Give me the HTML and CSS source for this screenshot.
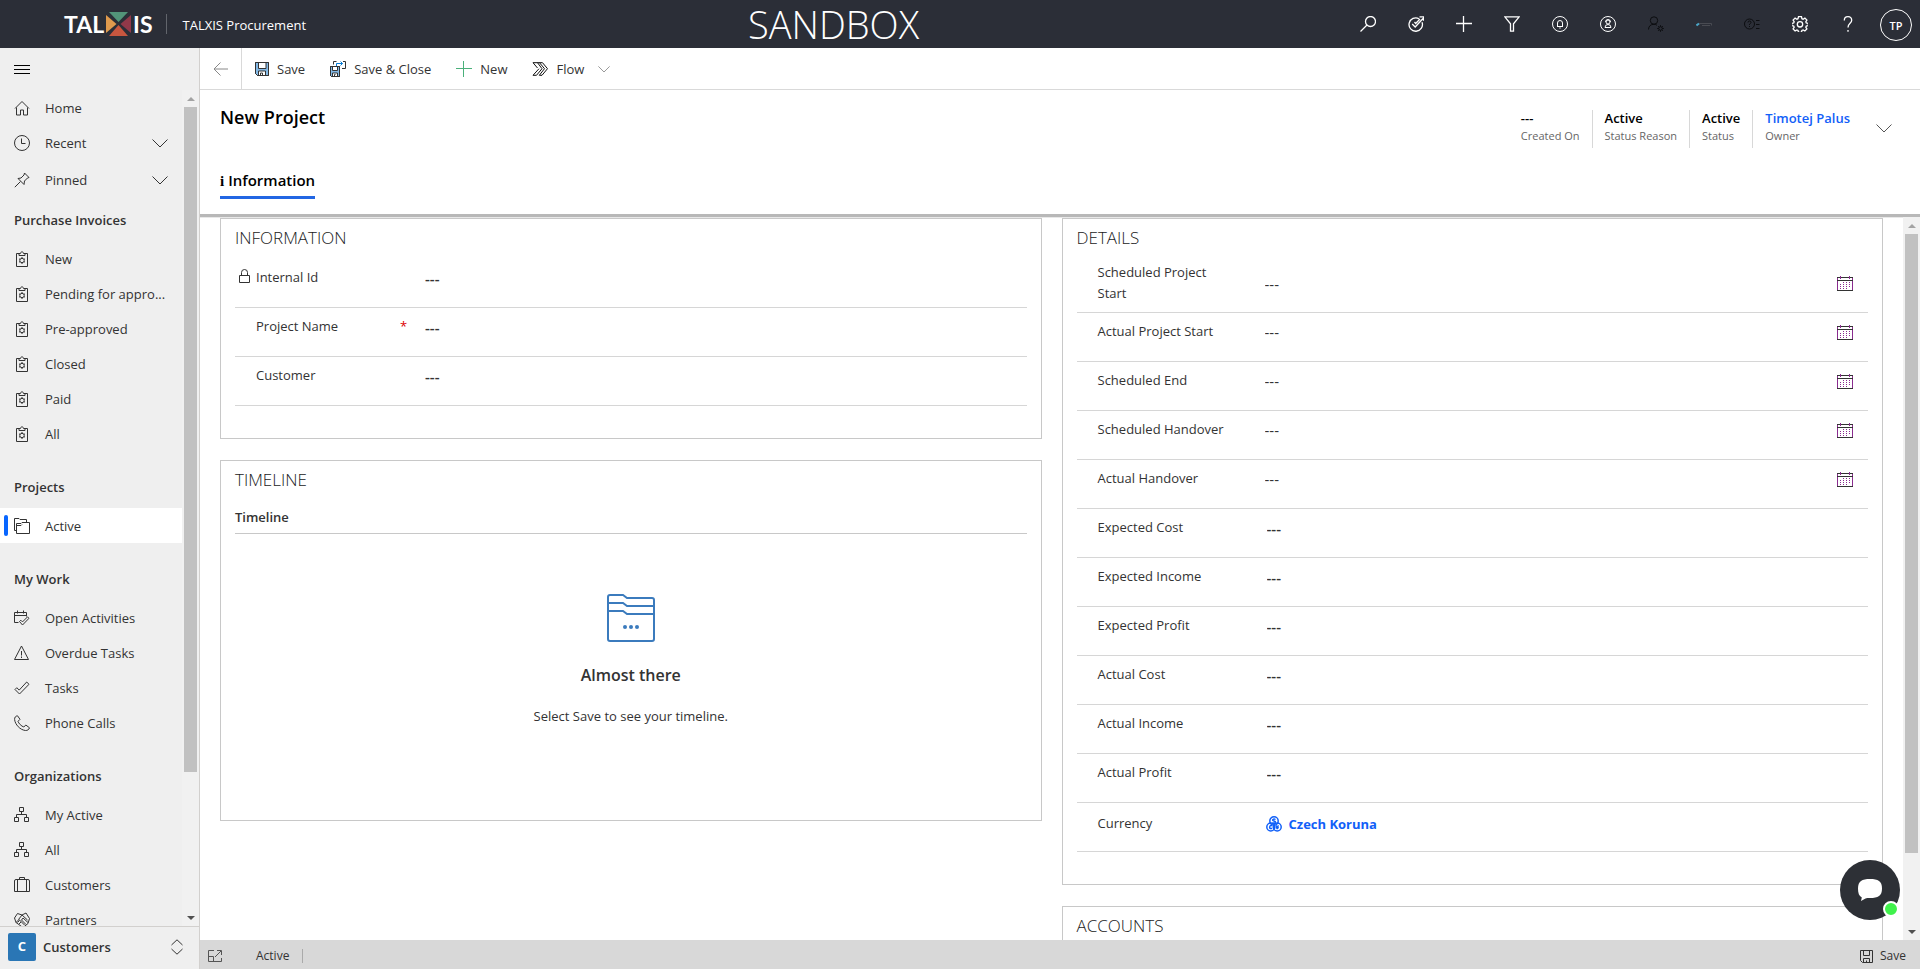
FILE: index.html
```html
<!DOCTYPE html>
<html lang="en">
<head>
<meta charset="utf-8">
<title>New Project - TALXIS Procurement</title>
<link rel="stylesheet" href="styles.css">
</head>
<body>
<svg class="sprite" aria-hidden="true">
  <symbol id="home" viewBox="0 0 16 16"><path d="M1 8.5 8 1.5l7 7M2.5 7.5v7.5h4v-5h3v5h4V7.5"/></symbol>
  <symbol id="clock" viewBox="0 0 16 16"><circle cx="8" cy="8" r="7.5"/><path d="M7.5 3.5v5h4"/></symbol>
  <symbol id="pin" viewBox="0 0 16 16"><path d="M10.5 1 15 5.500l-1.500.500-3 3-.500 3.500L4 6.500 7 6l3-3zM6.500 9.500.800 15.200"/></symbol>
  <symbol id="down" viewBox="0 0 16 16"><path d="M.5 4.500 8 12l7.500-7.500"/></symbol>
  <symbol id="clip" viewBox="0 0 16 16"><path d="M5 2.500H2.500v13h11v-13H11M5 4.500v-2h1.500C6.500.300 9.500.300 9.500 2.500H11v2z"/><circle cx="8" cy="9.500" r="2.200"/><path d="M8 6v1.200M8 11.800V13M5 7.800l1 .600M10 10.600l1 .600M5 11.200l1-.600M10 8.400l1-.600"/></symbol>
  <symbol id="folders" viewBox="0 0 16 16"><path d="M2.500 12.500h-2V.500H5l1 1h6.500v3M2.500 15.500v-10H7l1-1h7.500v11zM2.500 7.500H7l1-1"/></symbol>
  <symbol id="activity" viewBox="0 0 16 16"><path d="M4.500 12.500h-4v-10h12v4M.500 5.500h12M3.500.500v3M9.500.500v3M5.500 11.500l1.300-1.300 1.700 1.700 5-5 1.500 1.400-6.500 6.700z"/></symbol>
  <symbol id="warn" viewBox="0 0 16 16"><path d="M7.500 1 14.500 14.500H.500zM7.500 6v4.500M7.500 11.500v1.500"/></symbol>
  <symbol id="check" viewBox="0 0 16 16"><path d="m1 9.500 1.800-1.800 2.400 2.400L12.700 2 15 4.300 5.500 14z"/></symbol>
  <symbol id="phone" viewBox="0 0 16 16"><path d="M3.500.800C1.500 1 .500 2.500.600 4.500c.500 5 5.500 10.500 10.900 11 2 .100 3.500-1 4-2.700L11.800 10l-2 2C7.500 11.300 4.500 8.300 4 6.300l2-2z"/></symbol>
  <symbol id="org" viewBox="0 0 16 16"><path d="M5.500.500h4v4h-4zM.500 10.500h4v4h-4zM10.500 10.500h4v4h-4zM7.500 4.500v3M2.500 10.500v-3h10v3"/></symbol>
  <symbol id="bag" viewBox="0 0 16 16"><path d="M2 2.500h12q1.500 0 1.500 1.500v10.500H.500V4Q.500 2.500 2 2.500zM5.500 2.500v-2h5v2M3.500 2.500v12M12.500 2.500v12"/></symbol>
  <symbol id="hands" viewBox="0 0 16 16"><path d="M3.500 1.500 8 3l4-2 3.500 5.500-1.500 5-5 4L2 10.500.500 6zM4.500 7.500 8 3l5.500 5M2 10.500l3-3 5.500 5.500M5 12l2-2M3.500 10.500l2-2M12 12.500 7.500 8l1.500-2 5 4.500"/></symbol>
  <symbol id="updown" viewBox="0 0 16 16"><path d="M2.500 6 8 .8 13.500 6M2.500 10 8 15.200 13.500 10"/></symbol>
  <symbol id="floppy" viewBox="0 0 14 14"><path fill="#83b9e6" d="M.500.500h13v13h-11l-2-2z"/><path fill="#fff" d="M3.500.500h7.500v6H3.500zM3.500 13.500V9h7v4.500z"/><path d="M.500.500h13v13h-11l-2-2zM5.500 13.500V11h2v2.500"/></symbol>
  <symbol id="saveclose" viewBox="0 0 16 16"><path fill="#83b9e6" d="M.500 5.500h9v10h-8l-1-1z"/><path fill="#fff" d="M2.500 5.500h5v4h-5zM2.500 15.500V12h5v3.500z"/><path d="M.500 5.500h9v10h-8l-1-1zM4.500 15.500v-2h1M3.500 3.500v-3h3M13 .500h2.500v7H12"/><path stroke="#0078d4" d="M6.500 5V2.500h6M10.500.500l2 2-2 2"/></symbol>
  <symbol id="plus" viewBox="0 0 16 16"><path d="M7.500 0v16M0 7.500h16"/></symbol>
  <symbol id="flow" viewBox="0 0 16 14"><path d="M1 .700h9.500l5 6-5.500 6.600H7.300l5.200-6.600L7.500.700M1 .700 5.500 6M5.500 .700l4.500 6-5.500 6.600H1l6-6.600"/></symbol>
  <symbol id="back" viewBox="0 0 16 16"><path d="M15 8H1.500M7.500 1.500 1 8l6.500 6.500"/></symbol>
  <symbol id="search" viewBox="0 0 16 16"><circle cx="10.500" cy="5.500" r="5"/><path d="M7 9 .5 15.500"/></symbol>
  <symbol id="target" viewBox="0 0 16 16"><path d="M14 6.200A6.700 6.700 0 1 1 11 2.700M4.200 8l3 3L15 2.500M11.500.800h4v4M6.500 6l1.200 1.500L12 3"/></symbol>
  <symbol id="funnel" viewBox="0 0 16 16"><path d="M.8.800h14.400l-5.700 7v7.400h-3V7.800z"/></symbol>
  <symbol id="bell" viewBox="0 0 16 16"><circle cx="8" cy="8" r="7.500"/><path d="M5.500 10.500V7a2.500 2.500 0 0 1 5 0v3.500zM5 10.500h6M7.300 12h1.400"/></symbol>
  <symbol id="agent" viewBox="0 0 16 16"><circle cx="8" cy="8" r="7.500"/><circle cx="8" cy="6" r="2"/><path d="M5 11.500q0-3 3-3t3 3zM5.500 6a2.500 2.500 0 0 1 5 0"/></symbol>
  <symbol id="usergear" viewBox="0 0 16 16"><circle cx="6" cy="4.500" r="3.700"/><path d="M.500 13.500Q.800 8.300 6 8.300q2 0 3 1"/><circle cx="12.500" cy="12.500" r="1.800"/><path d="M12.500 9.200v1.500M12.500 14.300v1.500M9.200 12.500h1.500M14.300 12.500h1.500M10.200 10.200l1 1M13.800 13.800l1 1M10.200 14.800l1-1M13.800 11.200l1-1"/></symbol>
  <symbol id="helplist" viewBox="0 0 16 16"><circle cx="5.500" cy="8" r="5"/><path d="M4 6.500q0-1.500 1.500-1.500T7 6.500Q7 7.200 5.500 8.200v.8M5.500 10v1M12 4.500h3.500M12 8.500h3.500M12 12.500h3.500"/></symbol>
  <symbol id="gear" viewBox="0 0 16 16"><path d="M6.500.700h3l.400 2 1.200.500 1.800-1.100 2 2-1.100 1.800.500 1.100 2 .500v2l-2 .500-.500 1.200 1.100 1.800-2 2-1.800-1.100-1.200.500-.400 2h-3l-.500-2-1.100-.500-1.800 1.100-2-2 1.100-1.800-.500-1.200-2-.500v-2l2-.500.500-1.100-1.100-1.800 2-2 1.800 1.100L6 2.700z"/><circle cx="8" cy="8.300" r="2.700"/></symbol>
  <symbol id="question" viewBox="0 0 16 16"><path d="M4.300 4.500Q4.300.700 8 .700t3.700 3.600C11.700 7.300 8 7.500 8 11.500M8 14v1.800"/></symbol>
  <symbol id="lock" viewBox="0 0 12 14"><path d="M.500 6.500h10v7H.500zM2.500 6.500V3.500a3 3 0 0 1 6 0v3"/></symbol>
  <symbol id="cal" viewBox="0 0 16 15"><path stroke="#8a2c8f" d="M.500 1v13M15.500 1v13"/><path d="M0 1.500h16M0 4.500h16M0 14.500h16"/><path stroke="#8a2c8f" d="M3.500 0v3M12.500 0v3"/><path stroke="#8a2c8f" stroke-dasharray="1 2" d="M6 6.500h8M3 8.500h11M3 10.500h11M3 12.500h9"/></symbol>
  <symbol id="popout" viewBox="0 0 14 12"><path d="M6 .500H.500v11h13V8M.500 6.500h5v5M7 7l6-6M9 .500h4.500V5"/></symbol>
  <symbol id="coins" viewBox="0 0 16 16"><circle cx="8" cy="5" r="4.200"/><circle cx="4.800" cy="11" r="4"/><circle cx="11.200" cy="11" r="4"/><path d="M9.500 3.500q-1.500-1-2.500 0t1 1.500 1 1.700-2.500 0M6 9.800q-2-.800-2.300 1.200T6 12.200M9.800 9.500l1.400 1.500 1.400-1.500M11.200 11v2.200M9.800 11.800h3"/></symbol>
</svg>

<header class="topbar">
  <a class="logo" href="#" aria-label="TALXIS"><span>TAL</span>
    <svg class="logo-x" viewBox="0 0 25 24"><path fill="#529479" d="M3 0h19l-9.500 10z"/><path fill="#df9a4d" d="M0 3l10.500 9L0 21z"/><path fill="#913849" d="M25 3l-10.500 9L25 21z"/><path fill="#c7563f" d="M3 24h19l-9.500-11z"/></svg>
    <span>IS</span></a>
  <span class="app-name">TALXIS Procurement</span>
  <div class="env">SANDBOX</div>
  <div class="tools">
    <button aria-label="Search"><svg class="i"><use href="#search"/></svg></button>
    <button aria-label="Tasks"><svg class="i"><use href="#target"/></svg></button>
    <button aria-label="Create"><svg class="i"><use href="#plus"/></svg></button>
    <button aria-label="Filter"><svg class="i"><use href="#funnel"/></svg></button>
    <button class="thin" aria-label="Notifications"><svg class="i"><use href="#bell"/></svg></button>
    <button class="thin" aria-label="Account"><svg class="i"><use href="#agent"/></svg></button>
    <button class="dim" aria-label="User settings"><svg class="i"><use href="#usergear"/></svg></button>
    <button class="dim" aria-label="Banner"><svg class="i" viewBox="0 0 16 16"><path stroke="#494b52" d="M3 7.500h12.500v2M6 9.500h8"/><path stroke="#4ba6c8" stroke-width="2" d="M.5 9.500 3 7.500"/></svg></button>
    <button class="dim" aria-label="Guides"><svg class="i"><use href="#helplist"/></svg></button>
    <button aria-label="Settings"><svg class="i"><use href="#gear"/></svg></button>
    <button aria-label="Help"><svg class="i"><use href="#question"/></svg></button>
    <button aria-label="Profile"><span class="avatar">TP</span></button>
  </div>
</header>

<div class="shell">
  <aside class="sidebar">
    <button class="burger" aria-label="Toggle navigation"><span></span><span></span><span></span></button>
    <div class="nav-wrap">
      <nav class="nav">
        <a href="#"><svg class="i"><use href="#home"/></svg>Home</a>
        <a href="#"><svg class="i"><use href="#clock"/></svg>Recent<svg class="i end"><use href="#down"/></svg></a>
        <a href="#" class="pinned"><svg class="i"><use href="#pin"/></svg>Pinned<svg class="i end"><use href="#down"/></svg></a>
        <h2 class="first">Purchase Invoices</h2>
        <a href="#"><svg class="i"><use href="#clip"/></svg>New</a>
        <a href="#"><svg class="i"><use href="#clip"/></svg>Pending for appro...</a>
        <a href="#"><svg class="i"><use href="#clip"/></svg>Pre-approved</a>
        <a href="#"><svg class="i"><use href="#clip"/></svg>Closed</a>
        <a href="#"><svg class="i"><use href="#clip"/></svg>Paid</a>
        <a href="#"><svg class="i"><use href="#clip"/></svg>All</a>
        <h2>Projects</h2>
        <a href="#" class="current" aria-current="page"><svg class="i"><use href="#folders"/></svg>Active</a>
        <h2>My Work</h2>
        <a href="#"><svg class="i"><use href="#activity"/></svg>Open Activities</a>
        <a href="#"><svg class="i"><use href="#warn"/></svg>Overdue Tasks</a>
        <a href="#"><svg class="i"><use href="#check"/></svg>Tasks</a>
        <a href="#"><svg class="i"><use href="#phone"/></svg>Phone Calls</a>
        <h2>Organizations</h2>
        <a href="#"><svg class="i"><use href="#org"/></svg>My Active</a>
        <a href="#"><svg class="i"><use href="#org"/></svg>All</a>
        <a href="#"><svg class="i"><use href="#bag"/></svg>Customers</a>
        <a href="#"><svg class="i"><use href="#hands"/></svg>Partners</a>
      </nav>
      <div class="scroll nav-scroll" aria-hidden="true"><i class="up"></i><b></b><s></s><i class="dn"></i></div>
    </div>
    <button class="area"><span class="badge">C</span>Customers<svg class="i end"><use href="#updown"/></svg></button>
  </aside>

  <main class="main">
    <div class="commands">
      <button class="back" aria-label="Back"><svg class="i"><use href="#back"/></svg></button>
      <button><svg class="i floppy"><use href="#floppy"/></svg>Save</button>
      <button><svg class="i"><use href="#saveclose"/></svg>Save &amp; Close</button>
      <button><svg class="i green"><use href="#plus"/></svg>New</button>
      <button><svg class="i flow"><use href="#flow"/></svg>Flow<svg class="i small"><use href="#down"/></svg></button>
    </div>

    <div class="record">
      <div class="record-top">
        <h1>New Project</h1>
        <dl class="facts">
          <div><dd>---</dd><dt>Created On</dt></div>
          <div><dd>Active</dd><dt>Status Reason</dt></div>
          <div><dd>Active</dd><dt>Status</dt></div>
          <div><dd><a href="#">Timotej Palus</a></dd><dt>Owner</dt></div>
        </dl>
        <button class="expand" aria-label="More header fields"><svg class="i"><use href="#down"/></svg></button>
      </div>
      <div class="tabs" role="tablist"><button role="tab" aria-selected="true"><span class="info">i</span>Information</button></div>
    </div>

    <div class="body">
      <div class="columns">
        <div class="column">
          <section class="card">
            <h3>INFORMATION</h3>
            <div class="row"><label for="f1"><svg class="lock"><use href="#lock"/></svg>Internal Id</label><input id="f1" value="---" readonly></div>
            <div class="row"><label for="f2">Project Name<em>*</em></label><input id="f2" value="---"></div>
            <div class="row"><label for="f3">Customer</label><input id="f3" value="---"></div>
          </section>
          <section class="card timeline">
            <h3>TIMELINE</h3>
            <h4>Timeline</h4>
            <div class="empty">
              <svg class="folder" viewBox="0 0 48 48"><path d="M1 45V3q0-2 2-2h13l4 3h25q2 0 2 2v39q0 2-2 2H3q-2 0-2-2zM1 9h15l4 3h27M1 17h15l4 3h27"/><circle cx="18" cy="33" r="2"/><circle cx="24" cy="33" r="2"/><circle cx="30" cy="33" r="2"/></svg>
              <strong>Almost there</strong>
              <p>Select Save to see your timeline.</p>
            </div>
          </section>
        </div>
        <div class="column">
          <section class="card details">
            <h3>DETAILS</h3>
            <div class="row date"><label for="d1">Scheduled Project Start</label><input id="d1" value="---"><button aria-label="Pick date"><svg class="cal"><use href="#cal"/></svg></button></div>
            <div class="row date"><label for="d2">Actual Project Start</label><input id="d2" value="---"><button aria-label="Pick date"><svg class="cal"><use href="#cal"/></svg></button></div>
            <div class="row date"><label for="d3">Scheduled End</label><input id="d3" value="---"><button aria-label="Pick date"><svg class="cal"><use href="#cal"/></svg></button></div>
            <div class="row date"><label for="d4">Scheduled Handover</label><input id="d4" value="---"><button aria-label="Pick date"><svg class="cal"><use href="#cal"/></svg></button></div>
            <div class="row date"><label for="d5">Actual Handover</label><input id="d5" value="---"><button aria-label="Pick date"><svg class="cal"><use href="#cal"/></svg></button></div>
            <div class="row"><label for="d6">Expected Cost</label><input id="d6" value="---"></div>
            <div class="row"><label for="d7">Expected Income</label><input id="d7" value="---"></div>
            <div class="row"><label for="d8">Expected Profit</label><input id="d8" value="---"></div>
            <div class="row"><label for="d9">Actual Cost</label><input id="d9" value="---"></div>
            <div class="row"><label for="d10">Actual Income</label><input id="d10" value="---"></div>
            <div class="row"><label for="d11">Actual Profit</label><input id="d11" value="---"></div>
            <div class="row currency"><span class="label">Currency</span><a href="#"><svg class="i"><use href="#coins"/></svg>Czech Koruna</a></div>
          </section>
          <section class="card"><h3>ACCOUNTS</h3></section>
        </div>
      </div>
      <div class="scroll body-scroll" aria-hidden="true"><i class="up"></i><b></b><s></s><i class="dn"></i></div>
    </div>

    <footer class="status">
      <button aria-label="Pop out"><svg class="popout"><use href="#popout"/></svg></button>
      <span class="state">Active</span>
      <button class="save"><svg class="disk" viewBox="0 0 13 13"><path d="M.500.500h12v12h-10l-2-2zM3.500.500v5h6v-5M3.500 12.500v-4h6v4M6.500 12.500v-2"/></svg>Save</button>
    </footer>
  </main>
</div>

<button class="chat" aria-label="Open chat"><svg viewBox="0 0 24 22"><path fill="#fff" d="M12 0C20 0 24 2 24 9.500S20 19 12 19c-2 0-3.500 0-4.500.500L3 22l.800-3.500C1 17 0 14 0 9.500 0 2 4 0 12 0z"/></svg><span></span></button>
</body>
</html>
```
FILE: styles.css
```css
* { box-sizing: border-box; }
body {
  margin: 0;
  height: 100vh;
  display: flex;
  flex-direction: column;
  overflow: hidden;
  font: 13px/20px "Open Sans", "Noto Sans", sans-serif;
  color: #333;
  background: #fff;
}
button, input { font: inherit; color: inherit; background: none; border: 0; padding: 0; margin: 0; }
a { color: inherit; text-decoration: none; }
h1, h2, h3, h4, p, dl, dd { margin: 0; }
.sprite { position: absolute; width: 0; height: 0; }
svg { fill: none; stroke: currentColor; flex: none; }
.i { width: 16px; height: 16px; }

/* Top bar */
.topbar { display: flex; align-items: center; flex: none; height: 48px; background: #2b2e37; color: #fff; }
.topbar > * { flex: none; }
.logo { display: flex; align-items: center; gap: 2px; margin-left: 64px; padding-right: 13px; height: 20px; border-right: 1px solid #62656c; font: bold 23px/24px Lato, sans-serif; }
.logo-x { width: 25px; height: 24px; stroke: none; }
.app-name { margin: 2px 0 0 16px; }
.env { position: absolute; left: 748px; font-size: 38px; line-height: 40px; font-weight: 300; }
.tools { display: flex; margin-left: auto; }
.tools button { display: flex; align-items: center; justify-content: center; width: 48px; height: 46px; }
.tools .i { stroke-width: 1.3; }
.tools .thin .i, .tools .dim .i { stroke-width: 1; }
.tools .dim { color: #0c0d10; }
.avatar { width: 32px; height: 32px; margin-top: 2px; border: 1px solid #fff; border-radius: 50%; font-size: 11px; font-weight: 600; line-height: 31px; }

.shell { display: flex; flex: 1; min-height: 0; }

/* Site map */
.sidebar { display: flex; flex-direction: column; flex: none; width: 200px; background: #efefef; border-right: 1px solid #d2d0ce; }
.burger { display: flex; flex-direction: column; justify-content: center; gap: 3px; height: 42px; padding-left: 14px; }
.burger span { width: 16px; height: 1px; background: #000; }
.nav-wrap { display: flex; flex: 1; min-height: 0; }
.nav { flex: 1; overflow: hidden; }
.nav a { display: flex; align-items: center; gap: 15px; height: 35px; padding: 0 14px; white-space: nowrap; }
.nav .pinned { margin-top: 2px; }
.nav h2 { margin-top: 15px; padding-left: 14px; font-size: 13px; line-height: 42px; font-weight: 600; }
.nav .first { margin-top: 2px; }
.end { margin-left: auto; }
.nav .current { position: relative; background: #fff; }
.current::before { content: ""; position: absolute; left: 4px; top: 7px; width: 4px; height: 21px; border-radius: 2px; background: #0866ff; }
.area { display: flex; align-items: center; gap: 7px; height: 43px; padding: 0 14px 2px 8px; border-top: 1px solid #d2d0ce; font-weight: 600; }
.badge { width: 28px; height: 28px; border-radius: 2px; background: #2a76b5; color: #fff; line-height: 26px; font-weight: 700; }

/* Scroll tracks */
.scroll { display: flex; flex-direction: column; flex: none; width: 17px; align-items: center; background: #f1f1f1; }
.scroll i { display: flex; align-items: center; justify-content: center; height: 17px; }
.scroll i::before { content: ""; border: 4px solid transparent; }
.scroll .up::before { border-top: 0; border-bottom-color: #a3a3a3; }
.scroll .dn::before { border-bottom: 0; border-top-color: #505050; }
.scroll b { width: 13px; background: #c1c1c1; }
.nav-scroll b { flex: 664; }
.nav-scroll s { flex: 137; }
.body-scroll b { flex: 618; }
.body-scroll s { flex: 70; }

/* Command bar */
.main { display: flex; flex-direction: column; flex: 1; min-width: 0; }
.commands { display: flex; flex: none; height: 42px; gap: 25px; border-bottom: 1px solid #d9d9d9; }
.commands button { display: flex; align-items: center; gap: 8px; }
.commands .back { width: 42px; justify-content: center; color: #888; border-right: 1px solid #d9d9d9; margin-right: -12px; }
.commands .floppy { width: 14px; height: 14px; }
.commands .green { color: #4ab07a; }
.commands .flow { height: 14px; color: #111; }
.small { width: 12px; height: 12px; margin-left: 6px; color: #777; }

/* Record header */
.record { flex: none; padding: 0 20px; border-bottom: 3px solid #b8b8b8; box-shadow: 0 1px 0 #e8e8e8; height: 127px; }
.record-top { display: flex; align-items: flex-start; height: 74px; }
.record h1 { margin-top: 15px; font-size: 18px; line-height: 24px; font-weight: 600; color: #000; }
.facts { display: flex; margin: 20px 0 0 auto; font-size: 11px; color: #666; }
.facts div { display: flex; flex-direction: column; height: 38px; padding: 0 12px; border-left: 1px solid #d8d8d8; }
.facts div:first-child { border: 0; }
.facts dd { font-size: 13px; line-height: 16px; font-weight: 600; color: #000; }
.facts dd a { color: #1160f8; }
.expand { margin: 30px 8px 0 14px; height: 16px; color: #555; }
.tabs button { height: 35px; border-bottom: 3px solid #2266e3; font-size: 15px; line-height: 32px; font-weight: 600; color: #000; }
.info { margin-right: 4px; font: bold 15px/20px "Liberation Serif", serif; }

/* Form */
.body { display: flex; flex: 1; min-height: 0; }
.columns { display: grid; grid-template-columns: 1fr 1fr; gap: 20px; flex: 1; padding: 1px 20px 0; overflow: hidden; }
.column { display: flex; flex-direction: column; gap: 21px; }
.card { flex: none; border: 1px solid #c8c8c8; padding: 8px 14px 32px; }
.card h3 { margin-bottom: 10px; font-size: 17px; line-height: 22px; font-weight: 300; color: #222; }
.row { display: flex; align-items: flex-start; min-height: 49px; padding: 8px 0; border-bottom: 1px solid #d6d6d6; }
.row label, .label { position: relative; width: 148px; padding-left: 21px; line-height: 21px; flex: none; }
.row em { position: absolute; left: 165px; color: #d00; font-style: normal; line-height: 20px; }
.row input { flex: 1; min-width: 0; height: 20px; margin: 1px 0 0 42px; font-size: 15px; font-weight: 600; }
.lock { position: absolute; left: 4px; top: 2px; width: 12px; height: 14px; }
.details .date input { font-weight: 400; margin-left: 40px; }
.row button { margin: 4px 15px 0 0; height: 15px; }
.cal { display: block; width: 16px; height: 15px; }
.date:nth-child(2) { padding: 3px 0 8px; }
.details .date:nth-child(2) input { margin-top: 12px; }
.date:nth-child(2) button { margin-top: 14px; }
.currency a { display: flex; gap: 7px; margin: 3px 0 0 41px; color: #1160f8; font-weight: 700; }
.currency a svg { margin-top: 2px; stroke-width: 1.5; }
.currency .label { margin-top: 2px; }

.timeline { min-height: 361px; }
.timeline h4 { padding: 6px 0; border-bottom: 1px solid #c8c8c8; font-size: 13px; line-height: 20px; font-weight: 600; }
.empty { display: flex; flex-direction: column; align-items: center; padding-top: 60px; }
.folder { width: 48px; height: 48px; stroke: #3b7bbd; stroke-width: 2; }
.folder circle { fill: #3b7bbd; stroke: none; }
.empty strong { margin-top: 20px; font-size: 16px; line-height: 26px; font-weight: 600; }
.empty p { margin-top: 18px; }

/* Status bar */
.status { display: flex; align-items: center; flex: none; height: 29px; padding: 3px 14px 0 8px; background: #d8d8d8; font-size: 12px; line-height: 18px; }
.popout { display: block; width: 14px; height: 12px; color: #555; }
.state { margin-left: 34px; padding-right: 13px; line-height: 14px; border-right: 1px solid #aaa; }
.save { display: flex; align-items: center; gap: 7px; margin-left: auto; }
.disk { width: 13px; height: 13px; }

/* Chat launcher */
.chat { position: fixed; right: 20px; bottom: 49px; width: 60px; height: 60px; border-radius: 50%; background: #2d3036; }
.chat svg { display: block; width: 24px; height: 22px; margin: 0 auto; stroke: none; }
.chat span { position: absolute; right: 1px; bottom: 3px; width: 16px; height: 16px; border-radius: 50%; border: 2px solid #fff; background: #40f24c; }
```
